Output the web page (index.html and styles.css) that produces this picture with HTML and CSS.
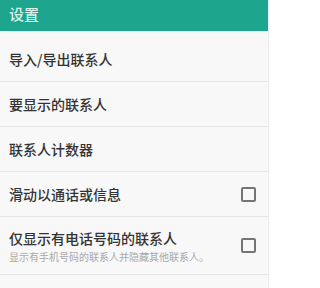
FILE: index.html
```html
<!DOCTYPE html>
<html lang="zh-CN">
<head>
<meta charset="utf-8">
<title>设置</title>
<link rel="stylesheet" href="styles.css">
</head>
<body>
<div class="screen">
  <header class="toolbar"><span class="toolbar-title">设置</span></header>
  <ul class="prefs">
    <li class="pref"><div class="pref-text"><div class="pref-title">导入/导出联系人</div></div></li>
    <li class="pref"><div class="pref-text"><div class="pref-title">要显示的联系人</div></div></li>
    <li class="pref"><div class="pref-text"><div class="pref-title">联系人计数器</div></div></li>
    <li class="pref"><div class="pref-text"><div class="pref-title">滑动以通话或信息</div></div><span class="checkbox"></span></li>
    <li class="pref pref-tall"><div class="pref-text"><div class="pref-title">仅显示有电话号码的联系人</div><div class="pref-summary">显示有手机号码的联系人并隐藏其他联系人。</div></div><span class="checkbox"></span></li>
  </ul>
</div>
</body>
</html>
```
FILE: styles.css
```css
html, body {
  margin: 0;
  padding: 0;
  background: #ffffff;
}
body {
  font-family: "Noto Sans CJK SC", "Noto Sans", sans-serif;
  width: 274px;
  height: 288px;
  overflow: hidden;
}
.screen {
  width: 269px;
  height: 288px;
  background: #f8f8f8;
  border-right: 1px solid #ececec;
  box-sizing: border-box;
}
.toolbar {
  height: 31px;
  background: #1ea58d;
  box-shadow: 0 1px 2px #dff6f4;
  padding: 1px 0 0 9px;
  box-sizing: border-box;
}
.toolbar-title {
  color: #d8f2eb;
  font-size: 15px;
  font-weight: 500;
  line-height: 20px;
}
.prefs {
  list-style: none;
  margin: 0;
  padding: 6px 0 0 0;
}
.pref {
  display: flex;
  align-items: center;
  height: 44px;
  padding: 0 12px 0 9px;
  border-bottom: 1px solid #e6e6e6;
}
.pref-tall {
  height: 57px;
}
.pref-text {
  flex: 1;
}
.pref-title {
  color: #333333;
  font-size: 14px;
  font-weight: 500;
  line-height: 18px;
}
.pref-summary {
  color: #a9a9a9;
  font-size: 10px;
  line-height: 13px;
  margin-top: 3px;
}
.checkbox {
  width: 15px;
  height: 15px;
  box-sizing: border-box;
  border: 2px solid #757575;
  border-radius: 2px;
}
```
